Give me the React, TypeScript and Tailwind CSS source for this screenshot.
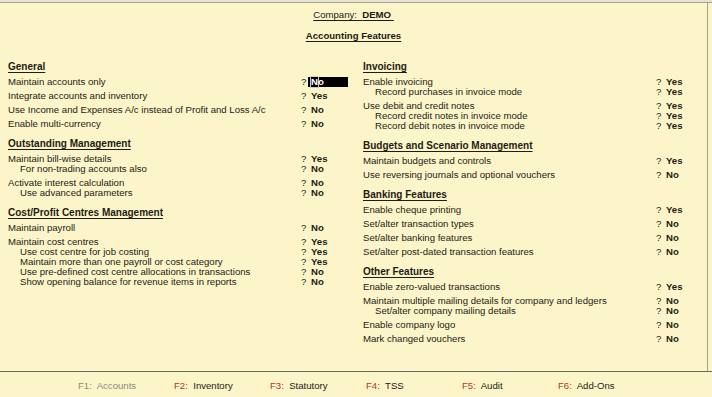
import React from 'react';

type Row = { label: string; value: 'Yes' | 'No'; sub?: boolean; active?: boolean };
type Section = { title: string; groups: Row[][] };

const left: Section[] = [
  {
    title: 'General',
    groups: [
      [{ label: 'Maintain accounts only', value: 'No', active: true }],
      [{ label: 'Integrate accounts and inventory', value: 'Yes' }],
      [{ label: 'Use Income and Expenses A/c instead of Profit and Loss A/c', value: 'No' }],
      [{ label: 'Enable multi-currency', value: 'No' }],
    ],
  },
  {
    title: 'Outstanding Management',
    groups: [
      [
        { label: 'Maintain bill-wise details', value: 'Yes' },
        { label: 'For non-trading accounts also', value: 'No', sub: true },
      ],
      [
        { label: 'Activate interest calculation', value: 'No' },
        { label: 'Use advanced parameters', value: 'No', sub: true },
      ],
    ],
  },
  {
    title: 'Cost/Profit Centres Management',
    groups: [
      [{ label: 'Maintain payroll', value: 'No' }],
      [
        { label: 'Maintain cost centres', value: 'Yes' },
        { label: 'Use cost centre for job costing', value: 'Yes', sub: true },
        { label: 'Maintain more than one payroll or cost category', value: 'Yes', sub: true },
        { label: 'Use pre-defined cost centre allocations in transactions', value: 'No', sub: true },
        { label: 'Show opening balance for revenue items in reports', value: 'No', sub: true },
      ],
    ],
  },
];

const right: Section[] = [
  {
    title: 'Invoicing',
    groups: [
      [
        { label: 'Enable invoicing', value: 'Yes' },
        { label: 'Record purchases in invoice mode', value: 'Yes', sub: true },
      ],
      [
        { label: 'Use debit and credit notes', value: 'Yes' },
        { label: 'Record credit notes in invoice mode', value: 'Yes', sub: true },
        { label: 'Record debit notes in invoice mode', value: 'Yes', sub: true },
      ],
    ],
  },
  {
    title: 'Budgets and Scenario Management',
    groups: [
      [{ label: 'Maintain budgets and controls', value: 'Yes' }],
      [{ label: 'Use reversing journals and optional vouchers', value: 'No' }],
    ],
  },
  {
    title: 'Banking Features',
    groups: [
      [{ label: 'Enable cheque printing', value: 'Yes' }],
      [{ label: 'Set/alter transaction types', value: 'No' }],
      [{ label: 'Set/alter banking features', value: 'No' }],
      [{ label: 'Set/alter post-dated transaction features', value: 'No' }],
    ],
  },
  {
    title: 'Other Features',
    groups: [
      [{ label: 'Enable zero-valued transactions', value: 'Yes' }],
      [
        { label: 'Maintain multiple mailing details for company and ledgers', value: 'No' },
        { label: 'Set/alter company mailing details', value: 'No', sub: true },
      ],
      [{ label: 'Enable company logo', value: 'No' }],
      [{ label: 'Mark changed vouchers', value: 'No' }],
    ],
  },
];

const keys = [
  { key: 'F1', label: 'Accounts', disabled: true },
  { key: 'F2', label: 'Inventory' },
  { key: 'F3', label: 'Statutory' },
  { key: 'F4', label: 'TSS' },
  { key: 'F5', label: 'Audit' },
  { key: 'F6', label: 'Add-Ons' },
];

const FeatureRow = ({ row }: { row: Row }) => (
  <div className="flex h-[10px] items-center leading-[10px]">
    <span className={`w-[293px] shrink-0 whitespace-nowrap ${row.sub ? 'pl-[12px]' : ''}`}>{row.label}</span>
    <span className="w-[7px] shrink-0">?</span>
    {row.active ? (
      <span className="flex h-[10px] w-[40px] items-center bg-black pl-[3px] font-bold text-white">
        <span className="outline outline-1 outline-[#c8c8d8]">N</span>o
      </span>
    ) : (
      <span className="w-[40px] pl-[3px] font-bold">{row.value}</span>
    )}
  </div>
);

const FeatureSection = ({ section }: { section: Section }) => (
  <div className="mb-[9px] flex flex-col gap-[4px]">
    <div className="h-[12px] text-[10px] font-bold leading-[12px]">
      <span className="underline underline-offset-[2px]">{section.title}</span>
    </div>
    {section.groups.map((g, i) => (
      <div key={i} className="flex flex-col">
        {g.map((r) => (
          <FeatureRow key={r.label} row={r} />
        ))}
      </div>
    ))}
  </div>
);

export default function App() {
  return (
    <div
      className="flex h-[397px] w-[712px] flex-col overflow-hidden bg-[#fcf5ca] text-[9.6px] text-[#1e1c14]"
      style={{ fontFamily: '"Liberation Sans", Arial, sans-serif' }}
    >
      <div className="h-[3px] shrink-0 border-b border-[#a3a293] bg-[#e6e3d2]" />
      <div className="flex w-[708px] flex-1 flex-col border-r border-[#a3a293]">
        <div className="pt-[6px] text-center leading-[12px]">
          <span className="underline underline-offset-[2px]">
            Company:&nbsp; <b>DEMO</b>&nbsp;
          </span>
        </div>
        <div className="mt-[9px] text-center text-[9.6px] font-bold leading-[12px]">
          <span className="underline underline-offset-[2px]">Accounting Features</span>
        </div>
        <div className="mt-[19px] grid grid-cols-[355px_353px]">
          <div className="pl-[8px]">
            {left.map((s) => (
              <FeatureSection key={s.title} section={s} />
            ))}
          </div>
          <div className="pl-[8px]">
            {right.map((s) => (
              <FeatureSection key={s.title} section={s} />
            ))}
          </div>
        </div>
      </div>
      <div className="flex h-[26px] shrink-0 items-center border-t border-[#6b6a5c] pl-[78px] pt-[3px] text-[9.6px]">
        {keys.map((k) => (
          <div key={k.key} className="w-[96px] shrink-0 whitespace-nowrap">
            {k.disabled ? (
              <span className="text-[#8c8b80]">
                {k.key}:&nbsp; {k.label}
              </span>
            ) : (
              <>
                <span className="text-[#c0302a]">{k.key}:</span>&nbsp; {k.label}
              </>
            )}
          </div>
        ))}
      </div>
    </div>
  );
}
